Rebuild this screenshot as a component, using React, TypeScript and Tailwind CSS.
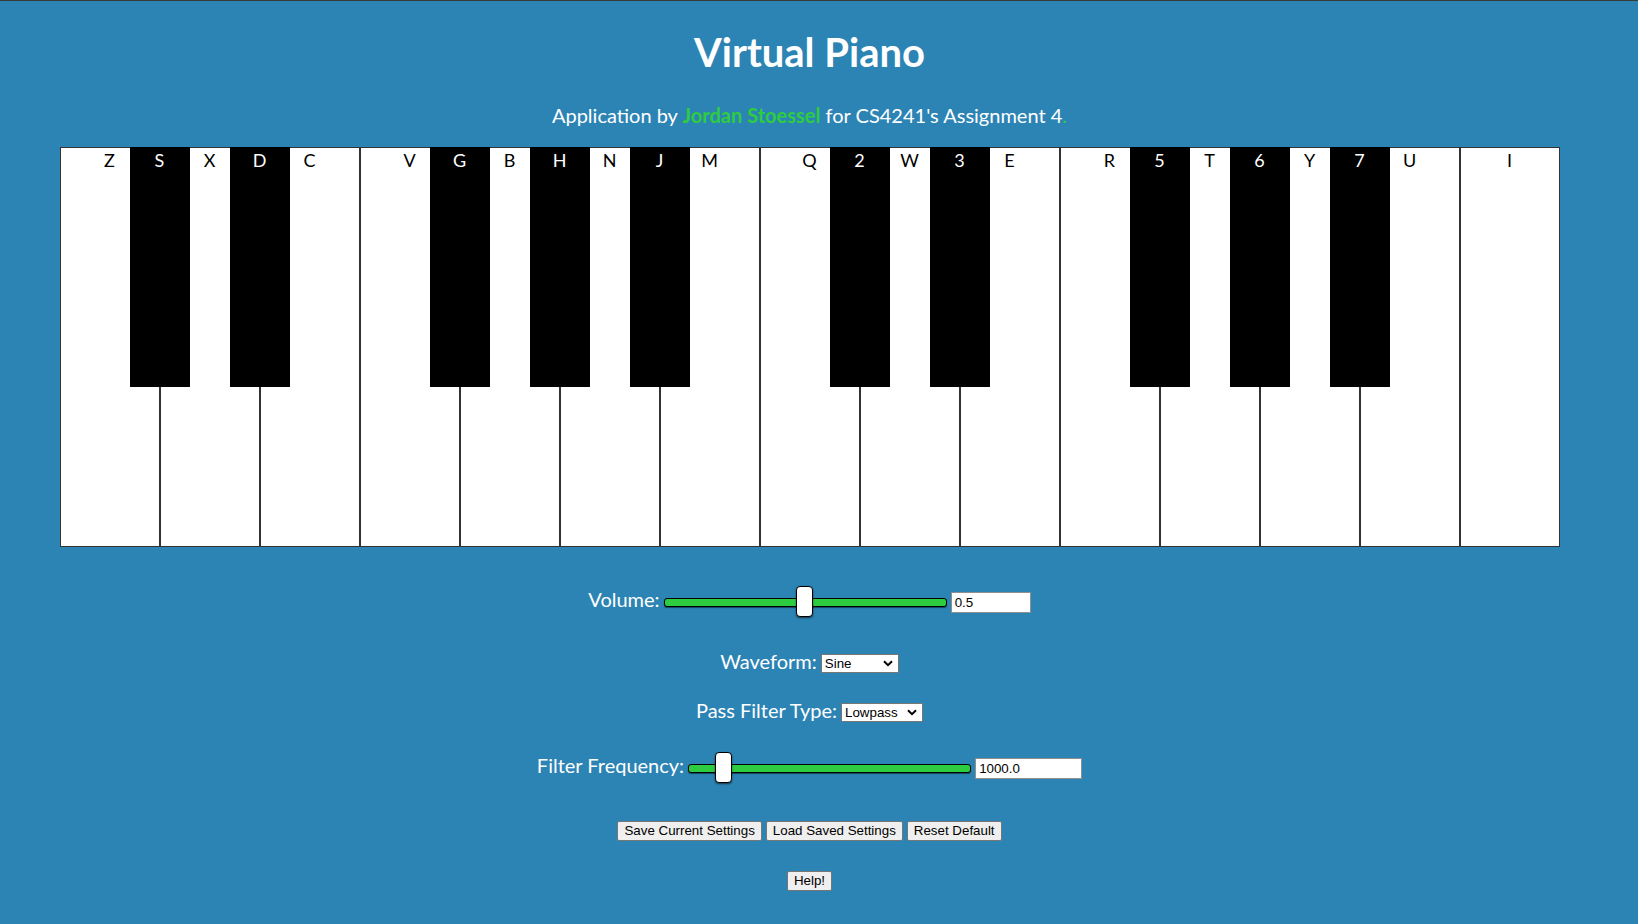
import React from "react";

const whiteKeys = ["Z", "X", "C", "V", "B", "N", "M", "Q", "W", "E", "R", "T", "Y", "U", "I"];

const blackKeys = [
  { k: "S", cls: "left-[69px]" },
  { k: "D", cls: "left-[169px]" },
  { k: "G", cls: "left-[369px]" },
  { k: "H", cls: "left-[469px]" },
  { k: "J", cls: "left-[569px]" },
  { k: "2", cls: "left-[769px]" },
  { k: "3", cls: "left-[869px]" },
  { k: "5", cls: "left-[1069px]" },
  { k: "6", cls: "left-[1169px]" },
  { k: "7", cls: "left-[1269px]" },
];

function Piano() {
  return (
    <div className="relative flex w-[1500px] h-[400px] border border-[#333333] bg-white">
      {whiteKeys.map((k, i) =>
        i < whiteKeys.length - 1 ? (
          <div key={k} className="w-[100px] shrink-0 h-full border-r-2 border-[#333333] text-center text-black text-[18px] leading-[22px] pt-[1px]">
            {k}
          </div>
        ) : (
          <div key={k} className="flex-1 h-full text-center text-black text-[18px] leading-[22px] pt-[1px]">
            {k}
          </div>
        )
      )}
      {blackKeys.map((b) => (
        <div
          key={b.k}
          className={`absolute top-[-1px] ${b.cls} w-[60px] h-[240px] bg-black text-white text-center text-[18px] leading-[22px] pt-[2px]`}
        >
          {b.k}
        </div>
      ))}
    </div>
  );
}

function Slider({ thumbCls }: { thumbCls: string }) {
  return (
    <div className="relative w-[283px] h-[31px] shrink-0">
      <div className="mt-[12px] h-[9px] w-full rounded-[3px] border border-black bg-[#2ecc40] shadow-[0_1px_1px_rgba(0,0,0,0.5)]" />
      <div
        className={`absolute top-0 ${thumbCls} w-[17px] h-[31px] rounded-[4px] border border-black bg-white shadow-[0_1px_2px_rgba(0,0,0,0.6)]`}
      />
    </div>
  );
}

function Select({ value, w }: { value: string; w: string }) {
  return (
    <div className={`relative mt-[5px] ${w} h-[19px] bg-white border border-[#767676] [font-family:'Liberation_Sans',Arial,sans-serif] text-[13.333px] leading-[17px] text-black pl-[3px]`}>
      {value}
      <svg className="absolute right-[5px] top-[5px]" width="10" height="7" viewBox="0 0 10 7">
        <path d="M1 1.2 L5 5.2 L9 1.2" fill="none" stroke="black" strokeWidth="2" />
      </svg>
    </div>
  );
}

function TextBox({ value, w }: { value: string; w: string }) {
  return (
    <div className={`mt-[6px] ${w} h-[21px] bg-white border border-[#8f8f8f] [font-family:'Liberation_Sans',Arial,sans-serif] text-[13.333px] leading-[19px] text-black pl-[3px]`}>
      {value}
    </div>
  );
}

function Btn({ children }: { children: React.ReactNode }) {
  return (
    <button className="h-[20px] px-[6px] bg-[#efefef] border border-[#767676] rounded-[2px] [font-family:'Liberation_Sans',Arial,sans-serif] text-[13.333px] leading-[16px] text-black">
      {children}
    </button>
  );
}

export default function App() {
  return (
    <div className="min-h-[924px] w-full bg-[#2c84b4] border-t border-[#3a3a3a] [font-family:Lato,'Noto_Sans',sans-serif] text-white">
      <div className="w-[1619px] flex flex-col items-center">
        <h1 className="mt-[27px] text-[40px] leading-[48px] font-bold">Virtual Piano</h1>
        <p className="mt-[27px] text-[20px] leading-[24px]">
          Application by <span className="font-bold text-[#2ecc40]">Jordan Stoessel</span> for CS4241's Assignment 4
          <span className="text-[#2ecc40]">.</span>
        </p>
        <div className="mt-[20px]">
          <Piano />
        </div>

        <div className="mt-[39px] flex items-start gap-1">
          <span className="mt-[1px] text-[20px] leading-[24px]">Volume:</span>
          <Slider thumbCls="left-[132px]" />
          <TextBox value="0.5" w="w-[80px]" />
        </div>

        <div className="mt-[32px] flex items-start gap-1">
          <span className="text-[20px] leading-[24px]">Waveform:</span>
          <Select value="Sine" w="w-[78px]" />
        </div>

        <div className="mt-[25px] flex items-start gap-1">
          <span className="text-[20px] leading-[24px]">Pass Filter Type:</span>
          <Select value="Lowpass" w="w-[82px]" />
        </div>

        <div className="mt-[30px] flex items-start gap-1">
          <span className="mt-[1px] text-[20px] leading-[24px]">Filter Frequency:</span>
          <Slider thumbCls="left-[27px]" />
          <TextBox value="1000.0" w="w-[107px]" />
        </div>

        <div className="mt-[38px] flex items-start gap-1">
          <Btn>Save Current Settings</Btn>
          <Btn>Load Saved Settings</Btn>
          <Btn>Reset Default</Btn>
        </div>

        <div className="mt-[26px]">
          <Btn>Help!</Btn>
        </div>
      </div>
    </div>
  );
}
